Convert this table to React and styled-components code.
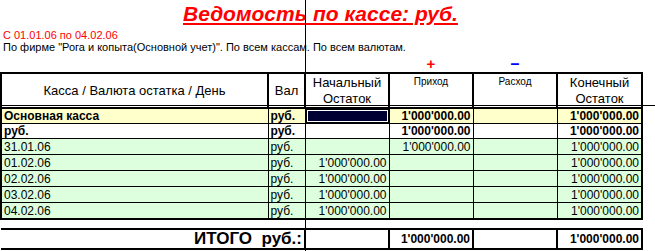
import React from 'react';
import styled, { createGlobalStyle, css } from 'styled-components';

const Global = createGlobalStyle`
  html, body { margin: 0; padding: 0; background: #fff; }
  body { font-family: "Liberation Sans", Arial, sans-serif; color: #000; }
`;

const Page = styled.div`
  position: relative;
  width: 655px;
  height: 251px;
  overflow: hidden;
  background: #fff;
`;

const Title = styled.div`
  height: 29px;
  padding-right: 14px;
  text-align: center;
  font-size: 21px;
  font-weight: bold;
  font-style: italic;
  line-height: 27px;
  color: #ff0000;
  span {
    text-decoration: underline;
    text-decoration-thickness: 2px;
    text-underline-offset: 2px;
  }
`;

const Info = styled.div`
  height: 12px;
  padding-left: 3px;
  font-size: 11px;
  line-height: 13px;
  white-space: nowrap;
  color: ${(p) => p.$color || '#000'};
`;

const Sheet = styled.table`
  border-collapse: collapse;
  table-layout: fixed;
  width: 641px;
  margin-left: 0;
`;

const SignCell = styled.td`
  height: 19px;
  padding: 0;
  text-align: center;
  vertical-align: bottom;
  font-weight: bold;
  font-size: ${(p) => (p.$minus ? '16px' : '15px')};
  line-height: 16px;
  color: ${(p) => (p.$minus ? '#0000ff' : '#ff0000')};
`;

const HeadCell = styled.th`
  border: 2px solid #000;
  height: 31px;
  padding: 0;
  font-weight: normal;
  text-align: center;
  font-size: ${(p) => (p.$small ? '10px' : '13px')};
  line-height: ${(p) => (p.$small ? '12px' : '16px')};
  vertical-align: ${(p) => (p.$small ? 'top' : 'middle')};
  padding-top: ${(p) => (p.$small ? '2px' : '0')};
`;

const bgs = { yellow: '#ffffcc', white: '#ffffff', green: '#ddffdd' };

const Cell = styled.td`
  border: 1px solid #000;
  border-left-width: ${(p) => (p.$first ? '2px' : '1px')};
  border-right-width: ${(p) => (p.$last ? '2px' : '1px')};
  border-bottom-width: ${(p) => (p.$bottom ? '2px' : '1px')};
  height: ${(p) => p.$h || 15}px;
  padding: 0 2px;
  font-size: 12px;
  line-height: 13px;
  vertical-align: bottom;
  white-space: nowrap;
  overflow: hidden;
  font-weight: ${(p) => (p.$bold ? 'bold' : 'normal')};
  text-align: ${(p) => p.$align || 'left'};
  background: ${(p) => bgs[p.$bg] || '#fff'};
  ${(p) =>
    p.$selected &&
    css`
      background: #000033;
      box-shadow: inset 0 0 0 1px #000, inset 0 0 0 2px #fff;
    `}
`;

const Spacer = styled.td`
  height: 8px;
  padding: 0;
`;

const TotalCell = styled.td`
  border: 2px solid #000;
  border-left-width: ${(p) => (p.$open ? '0' : '2px')};
  height: 18px;
  padding: 0 2px;
  font-weight: bold;
  text-align: right;
  vertical-align: middle;
  white-space: nowrap;
  font-size: ${(p) => (p.$big ? '17px' : '12px')};
  line-height: 16px;
`;

const FreezeV = styled.div`
  position: absolute;
  left: 305px;
  top: 0;
  bottom: 0;
  width: 1px;
  background: #000;
  pointer-events: none;
`;

const FreezeH = styled.div`
  position: absolute;
  left: 0;
  right: 0;
  top: 105px;
  height: 1px;
  background: #000;
  pointer-events: none;
`;

const V = "1'000'000.00";

const rows = [
  { label: 'Основная касса', bg: 'yellow', bold: true, start: 'sel', inc: V, out: '', end: V, h: 14 },
  { label: 'руб.', bg: 'white', bold: true, start: '', inc: V, out: '', end: V, h: 14 },
  { label: '31.01.06', bg: 'green', start: '', inc: V, out: '', end: V },
  { label: '01.02.06', bg: 'green', start: V, inc: '', out: '', end: V },
  { label: '02.02.06', bg: 'green', start: V, inc: '', out: '', end: V },
  { label: '03.02.06', bg: 'green', start: V, inc: '', out: '', end: V },
  { label: '04.02.06', bg: 'green', start: V, inc: '', out: '', end: V },
];

export default function App() {
  return (
    <Page>
      <Global />
      <Title>
        <span>Ведомость по кассе: руб.</span>
      </Title>
      <Info $color="#ff0000">С 01.01.06 по 04.02.06</Info>
      <Info>По фирме "Рога и копыта(Основной учет)". По всем кассам. По всем валютам.</Info>
      <Sheet>
        <colgroup>
          <col style={{ width: 267 }} />
          <col style={{ width: 37 }} />
          <col style={{ width: 84 }} />
          <col style={{ width: 84 }} />
          <col style={{ width: 84 }} />
          <col style={{ width: 85 }} />
        </colgroup>
        <tbody>
          <tr>
            <SignCell />
            <SignCell />
            <SignCell />
            <SignCell>+</SignCell>
            <SignCell $minus>–</SignCell>
            <SignCell />
          </tr>
          <tr>
            <HeadCell>Касса / Валюта остатка / День</HeadCell>
            <HeadCell>Вал</HeadCell>
            <HeadCell>
              Начальный
              <br />
              Остаток
            </HeadCell>
            <HeadCell $small>Приход</HeadCell>
            <HeadCell $small>Расход</HeadCell>
            <HeadCell>
              Конечный
              <br />
              Остаток
            </HeadCell>
          </tr>
          {rows.map((r, i) => {
            const bottom = i === rows.length - 1;
            const common = { $bg: r.bg, $bold: r.bold, $bottom: bottom, $h: r.h };
            return (
              <tr key={r.label + i}>
                <Cell {...common} $first>
                  {r.label}
                </Cell>
                <Cell {...common}>руб.</Cell>
                <Cell {...common} $align="right" $selected={r.start === 'sel'}>
                  {r.start === 'sel' ? '' : r.start}
                </Cell>
                <Cell {...common} $align="right">
                  {r.inc}
                </Cell>
                <Cell {...common} $align="right">
                  {r.out}
                </Cell>
                <Cell {...common} $align="right" $last>
                  {r.end}
                </Cell>
              </tr>
            );
          })}
          <tr>
            <Spacer colSpan={6} />
          </tr>
          <tr>
            <TotalCell colSpan={2} $big $open>
              ИТОГО&nbsp; руб.:
            </TotalCell>
            <TotalCell />
            <TotalCell>{V}</TotalCell>
            <TotalCell />
            <TotalCell>{V}</TotalCell>
          </tr>
        </tbody>
      </Sheet>
      <FreezeV />
      <FreezeH />
    </Page>
  );
}
